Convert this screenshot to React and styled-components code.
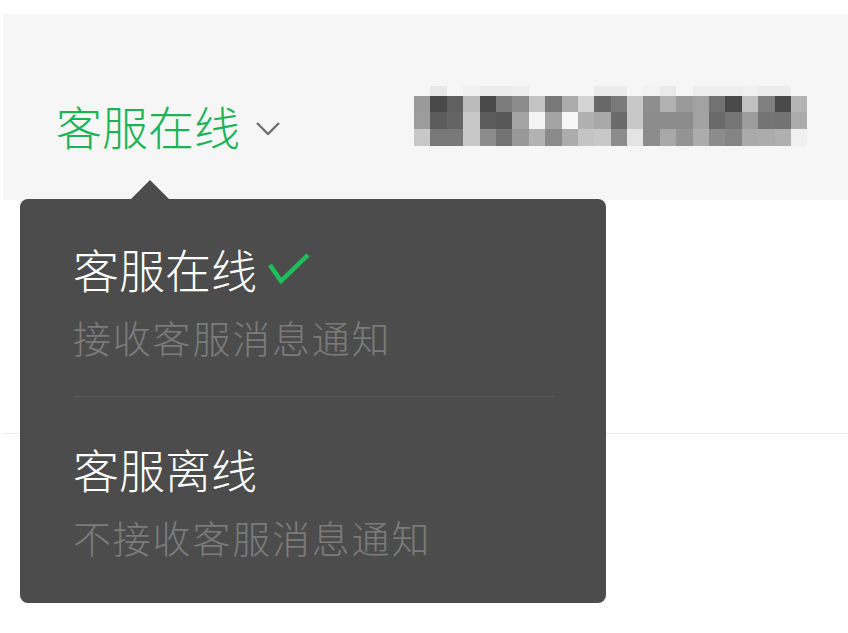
import React from "react";
import styled, { createGlobalStyle } from "styled-components";

const GlobalStyle = createGlobalStyle`
  body {
    margin: 0;
    background: #fff;
    font-family: "Noto Sans CJK SC", "Noto Sans", sans-serif;
  }
`;

const Page = styled.div`
  position: relative;
  width: 848px;
  height: 633px;
  overflow: hidden;
  background: #fff;
`;

const Header = styled.div`
  margin: 14px 0 0 3px;
  height: 186px;
  box-sizing: border-box;
  padding: 72px 0 0 53px;
  background: #f6f6f6;
  display: flex;
  align-items: flex-start;
`;

const StatusButton = styled.div`
  display: flex;
  align-items: center;
  margin-top: 16px;
  color: #1bb356;
  font-size: 46px;
  font-weight: 300;
  line-height: 46px;
  cursor: pointer;
`;

const Chevron = styled.svg`
  margin: 6px 0 0 16px;
`;

const Mosaic = styled.div`
  margin-left: 134px;
  display: grid;
  grid-template-columns: repeat(24, 16.4px);
  grid-template-rows: 10px 16px 17px 17px;
`;

const Cell = styled.div``;

const Body = styled.div`
  margin-left: 3px;
  height: 233px;
  border-bottom: 1px solid #ececec;
`;

const Popover = styled.div`
  position: absolute;
  left: 20px;
  top: 199px;
  width: 586px;
  height: 404px;
  box-sizing: border-box;
  background: #4c4c4c;
  border-radius: 8px;
`;

const Arrow = styled.div`
  position: absolute;
  top: -19px;
  left: 111px;
  width: 0;
  height: 0;
  border-left: 19px solid transparent;
  border-right: 19px solid transparent;
  border-bottom: 19px solid #4c4c4c;
`;

const Item = styled.div`
  margin: 0 51px 0 53px;
  padding: 46px 0 40px;
  cursor: pointer;

  & + & {
    padding: 48px 0 47px;
    border-top: 1px solid #595959;
  }
`;

const ItemTitle = styled.div`
  display: flex;
  align-items: center;
  color: #fff;
  font-size: 46px;
  font-weight: 300;
  line-height: 46px;
`;

const Check = styled.svg`
  margin: 0 0 0 11px;
`;

const ItemDesc = styled.div`
  margin-top: 27px;
  color: #7b7b7b;
  font-size: 38px;
  font-weight: 300;
  line-height: 38px;
  letter-spacing: 1.8px;
`;

const mosaicRows = [
  "f6 e8 f6 f0 ec ec ee f6 f6 f6 f6 eb eb f6 f3 ea f6 ee ee ee f0 ec ec f6",
  "9a 48 60 bb 4a 7c 8c c4 78 ab d4 68 7a c8 8e b2 9a a2 72 4a c0 80 4a b4",
  "9c 5c 64 c8 5c 58 a4 f4 a4 f6 b0 a8 6a c8 8c 8c 8c a2 6a 76 9c 74 72 ac",
  "c8 78 78 c8 8c 72 98 b2 8a ac c4 c8 8c e4 8c a8 94 ac 8c 84 aa ac b0 f0",
];

const options = [
  { title: "客服在线", desc: "接收客服消息通知", active: true },
  { title: "客服离线", desc: "不接收客服消息通知", active: false },
];

export default function App() {
  return (
    <Page>
      <GlobalStyle />
      <Header>
        <StatusButton>
          客服在线
          <Chevron width="24" height="13" viewBox="0 0 24 13">
            <path d="M1 1 L12 12 L23 1" fill="none" stroke="#707070" strokeWidth="2.4" />
          </Chevron>
        </StatusButton>
        <Mosaic>
          {mosaicRows.map((row, r) =>
            row.split(" ").map((g, c) => (
              <Cell key={`${r}-${c}`} style={{ background: `#${g}${g}${g}` }} />
            ))
          )}
        </Mosaic>
      </Header>
      <Body />
      <Popover>
        <Arrow />
        {options.map((o) => (
          <Item key={o.title}>
            <ItemTitle>
              {o.title}
              {o.active && (
                <Check width="42" height="31" viewBox="0 0 42 31">
                  <path d="M2 12 L13 28 L40 2" fill="none" stroke="#1cc05a" strokeWidth="4.5" strokeLinejoin="miter" />
                </Check>
              )}
            </ItemTitle>
            <ItemDesc>{o.desc}</ItemDesc>
          </Item>
        ))}
      </Popover>
    </Page>
  );
}
